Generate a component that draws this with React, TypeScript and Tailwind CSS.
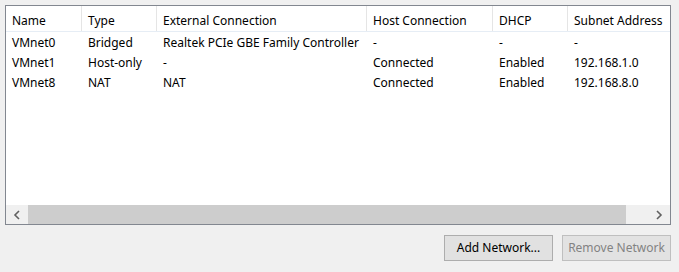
const columns = [
  { title: "Name", width: "w-[76px]" },
  { title: "Type", width: "w-[75px]" },
  { title: "External Connection", width: "w-[210px]" },
  { title: "Host Connection", width: "w-[126px]" },
  { title: "DHCP", width: "w-[75px]" },
  { title: "Subnet Address", width: "w-[120px]" },
];

const rows = [
  ["VMnet0", "Bridged", "Realtek PCIe GBE Family Controller", "-", "-", "-"],
  ["VMnet1", "Host-only", "-", "Connected", "Enabled", "192.168.1.0"],
  ["VMnet8", "NAT", "NAT", "Connected", "Enabled", "192.168.8.0"],
];

const Chevron = ({ dir }: { dir: "left" | "right" }) => (
  <svg width="8" height="10" viewBox="0 0 8 10">
    <path
      d={dir === "left" ? "M6 1 L2 5 L6 9" : "M2 1 L6 5 L2 9"}
      stroke="#606060"
      strokeWidth="1.6"
      fill="none"
    />
  </svg>
);

export default function App() {
  return (
    <div
      className="w-[679px] h-[272px] bg-[#f0f0f0] pt-[5px] px-[5px] text-[12px] text-black"
      style={{ fontFamily: '"Noto Sans", "Open Sans", sans-serif' }}
    >
      <div className="w-[666px] h-[220px] border border-[#828790] bg-white flex flex-col">
        <div className="flex-1 overflow-hidden">
          <div className="flex h-[26px] border-b border-[#e6edf5]">
            {columns.map((c) => (
              <div
                key={c.title}
                className={`${c.width} shrink-0 flex items-center pl-[6px] pt-[5px] border-r border-[#e5e5e5] whitespace-nowrap leading-none`}
              >
                {c.title}
              </div>
            ))}
          </div>
          <div className="pt-[1px]">
            {rows.map((r) => (
              <div key={r[0]} className="flex h-[20px] items-center">
                {r.map((cell, i) => (
                  <div
                    key={i}
                    className={`${columns[i].width} shrink-0 pl-[6px] whitespace-nowrap leading-none`}
                  >
                    {cell}
                  </div>
                ))}
              </div>
            ))}
          </div>
        </div>
        <div className="h-[19px] flex bg-[#f0f0f0]">
          <div className="w-[22px] flex items-center justify-center">
            <Chevron dir="left" />
          </div>
          <div className="w-[598px] bg-[#cdcdcd]" />
          <div className="flex-1" />
          <div className="w-[22px] flex items-center justify-center">
            <Chevron dir="right" />
          </div>
        </div>
      </div>
      <div className="flex justify-end gap-[9px] mt-[10px] pr-[3px]">
        <button className="w-[109px] h-[26px] bg-[#e1e1e1] border border-[#adadad] leading-none">
          Add Network...
        </button>
        <button className="w-[109px] h-[26px] bg-[#cccccc]/40 border border-[#bfbfbf] text-[#838383] leading-none">
          Remove Network
        </button>
      </div>
    </div>
  );
}
